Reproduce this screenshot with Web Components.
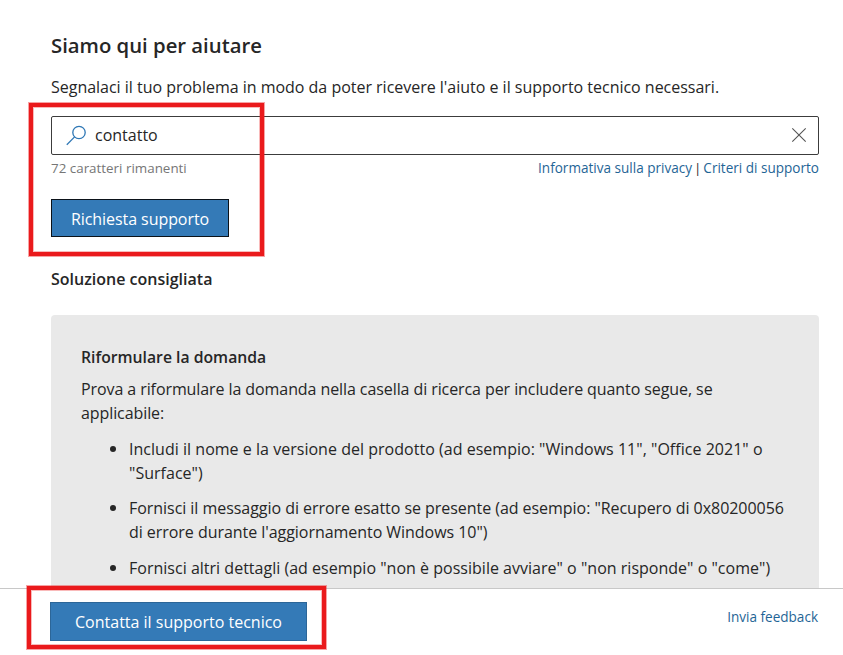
<!DOCTYPE html>
<html lang="it">
<head>
<meta charset="utf-8">
<title>Siamo qui per aiutare</title>
<style>
    body {
        margin: 0;
        overflow: hidden;
        background: #fff;
        color: #262626;
        font: 16px/24px "Open Sans", "Noto Sans", sans-serif;
    }
</style>
</head>
<body>
<help-page>
    <search-panel heading="Siamo qui per aiutare">
        <span slot="intro">Segnalaci il tuo problema in modo da poter ricevere l'aiuto e il supporto tecnico necessari.</span>
        <search-field slot="field">contatto</search-field>
        <span slot="hint">72 caratteri rimanenti</span>
        <text-link slot="links">Informativa sulla privacy</text-link>
        <span slot="links">|</span>
        <text-link slot="links">Criteri di supporto</text-link>
        <action-button slot="action" class="focused">Richiesta supporto</action-button>
    </search-panel>
    <solution-card label="Soluzione consigliata" heading="Riformulare la domanda">
        <span slot="text">Prova a riformulare la domanda nella casella di ricerca per includere quanto segue, se applicabile:</span>
        <solution-item style="letter-spacing: 0.025px">Includi il nome e la versione del prodotto (ad esempio: "Windows 11", "Office 2021" o "Surface")</solution-item>
        <solution-item style="letter-spacing: -0.045px">Fornisci il messaggio di errore esatto se presente (ad esempio: "Recupero di 0x80200056 di errore durante l'aggiornamento Windows 10")</solution-item>
        <solution-item style="letter-spacing: 0.015px">Fornisci altri dettagli (ad esempio "non è possibile avviare" o "non risponde" o "come")</solution-item>
    </solution-card>
    <help-footer slot="footer">
        <action-button class="wide">Contatta il supporto tecnico</action-button>
        <text-link slot="end">Invia feedback</text-link>
    </help-footer>
    <highlight-frame slot="marks" style="left: 29px; top: 103px; width: 235px; height: 153px"></highlight-frame>
    <highlight-frame slot="marks" style="left: 27px; top: 586px; width: 299px; height: 63px"></highlight-frame>
</help-page>

<script>
class HelpPage extends HTMLElement {
    constructor() {
        super();

        this.attachShadow({ mode: "open" });
        this.shadowRoot.innerHTML = `
        <style>
            :host {
                display: flex;
                flex-direction: column;
                position: relative;
                height: 655px;
                overflow: hidden;
            }

            main {
                flex: 1;
                min-height: 0;
                overflow: hidden;
                padding: 30px 24px 0 51px;
            }
        </style>
        <main><slot></slot></main>
        <slot name="footer"></slot>
        <slot name="marks"></slot>`;
    }
}

class SearchPanel extends HTMLElement {
    constructor() {
        super();

        this.attachShadow({ mode: "open" });
        this.shadowRoot.innerHTML = `
        <style>
            :host {
                display: block;
            }

            h1 {
                margin: 0;
                font-size: 20.3px;
                line-height: 30px;
                font-weight: 600;
            }

            p {
                margin: 15px 0 17px;
                letter-spacing: -0.015px;
            }

            .below {
                display: flex;
                justify-content: space-between;
                margin-top: 3px;
                font-size: 13.4px;
                line-height: 20px;
            }

            .hint {
                color: #767676;
            }

            .links {
                display: flex;
                gap: 2px;
            }

            .action {
                display: flex;
                margin-top: 21px;
            }
        </style>
        <h1>${this.getAttribute("heading")}</h1>
        <p><slot name="intro"></slot></p>
        <slot name="field"></slot>
        <div class="below">
            <div class="hint"><slot name="hint"></slot></div>
            <div class="links"><slot name="links"></slot></div>
        </div>
        <div class="action"><slot name="action"></slot></div>`;
    }
}

class SearchField extends HTMLElement {
    constructor() {
        super();

        this.attachShadow({ mode: "open" });
        this.shadowRoot.innerHTML = `
        <style>
            :host {
                display: flex;
                align-items: center;
                box-sizing: border-box;
                height: 39px;
                padding: 0 11px 0 14px;
                border: 1px solid #3c3c3c;
                border-radius: 2px;
            }

            .value {
                flex: 1;
                margin-left: 8px;
                line-height: 37px;
            }

            svg {
                display: block;
                margin-bottom: 1px;
                fill: none;
            }
        </style>
        <svg width="21" height="21" viewBox="0 0 21 21" stroke="#2e77b5" stroke-width="1.3">
            <circle cx="13" cy="7.5" r="6.2"/>
            <path d="M8.6 11.9 L0.8 19.7"/>
        </svg>
        <span class="value"><slot></slot></span>
        <svg width="16" height="16" viewBox="0 0 16 16" stroke="#555" stroke-width="1.1">
            <path d="M1.3 1.3 L14.7 14.7 M14.7 1.3 L1.3 14.7"/>
        </svg>`;
    }
}

class TextLink extends HTMLElement {
    constructor() {
        super();

        this.attachShadow({ mode: "open" });
        this.shadowRoot.innerHTML = `
        <style>
            :host {
                display: inline-block;
                color: #1f6596;
                font-size: 13.55px;
                line-height: 20px;
                cursor: pointer;
            }
        </style>
        <slot></slot>`;
    }
}

class ActionButton extends HTMLElement {
    constructor() {
        super();

        this.attachShadow({ mode: "open" });
        this.shadowRoot.innerHTML = `
        <style>
            :host {
                display: flex;
                align-items: center;
                justify-content: center;
                box-sizing: border-box;
                width: 178px;
                height: 38px;
                border: 1px solid #2c6698;
                background: #347ab7;
                color: #fff;
                cursor: pointer;
            }

            :host(.focused) {
                padding-top: 1px;
                border-color: #0b1219;
                letter-spacing: -0.06px;
            }

            :host(.wide) {
                width: 257px;
                height: 39px;
            }
        </style>
        <span><slot></slot></span>`;
    }
}

class SolutionCard extends HTMLElement {
    constructor() {
        super();

        this.attachShadow({ mode: "open" });
        this.shadowRoot.innerHTML = `
        <style>
            :host {
                display: block;
                margin-top: 30px;
            }

            h2, h3 {
                margin: 0;
                font-size: 16px;
                line-height: 24px;
                font-weight: 600;
            }

            h3 {
                font-size: 15.75px;
            }

            .card {
                box-sizing: border-box;
                height: 330px;
                margin-top: 24px;
                padding: 30px;
                border-radius: 4px;
                background: #e9e9e9;
            }

            p {
                margin: 8px 0 11.9px;
                letter-spacing: -0.085px;
            }

            .list {
                display: flex;
                flex-direction: column;
                gap: 11.5px;
                padding-left: 48px;
            }
        </style>
        <h2>${this.getAttribute("label")}</h2>
        <div class="card">
            <h3>${this.getAttribute("heading")}</h3>
            <p><slot name="text"></slot></p>
            <div class="list"><slot></slot></div>
        </div>`;
    }
}

class SolutionItem extends HTMLElement {
    constructor() {
        super();

        this.attachShadow({ mode: "open" });
        this.shadowRoot.innerHTML = `
        <style>
            :host {
                display: flex;
                margin-left: -19px;
            }

            i {
                flex: none;
                width: 6px;
                height: 6px;
                margin: 9px 13px 0 0;
                border-radius: 50%;
                background: #262626;
            }
        </style>
        <i></i>
        <span><slot></slot></span>`;
    }
}

class HelpFooter extends HTMLElement {
    constructor() {
        super();

        this.attachShadow({ mode: "open" });
        this.shadowRoot.innerHTML = `
        <style>
            :host {
                display: flex;
                justify-content: space-between;
                align-items: flex-start;
                box-sizing: border-box;
                height: 67px;
                padding: 13px 25px 0 50px;
                border-top: 1px solid #c8c8c8;
                background: #fff;
            }

            .end {
                display: flex;
                margin-top: 5px;
            }
        </style>
        <slot></slot>
        <div class="end"><slot name="end"></slot></div>`;
    }
}

// Red outline laid over the page to point at a step
class HighlightFrame extends HTMLElement {
    constructor() {
        super();

        this.attachShadow({ mode: "open" });
        this.shadowRoot.innerHTML = `
        <style>
            :host {
                position: absolute;
                box-sizing: border-box;
                border: 4px solid #ea1a1c;
                box-shadow: 0 0 0 1px rgba(234, 26, 28, 0.4), inset 0 0 0 1px rgba(234, 26, 28, 0.3);
                pointer-events: none;
            }
        </style>`;
    }
}

window.customElements.define('help-page', HelpPage);
window.customElements.define('search-panel', SearchPanel);
window.customElements.define('search-field', SearchField);
window.customElements.define('text-link', TextLink);
window.customElements.define('action-button', ActionButton);
window.customElements.define('solution-card', SolutionCard);
window.customElements.define('solution-item', SolutionItem);
window.customElements.define('help-footer', HelpFooter);
window.customElements.define('highlight-frame', HighlightFrame);
</script>
</body>
</html>
